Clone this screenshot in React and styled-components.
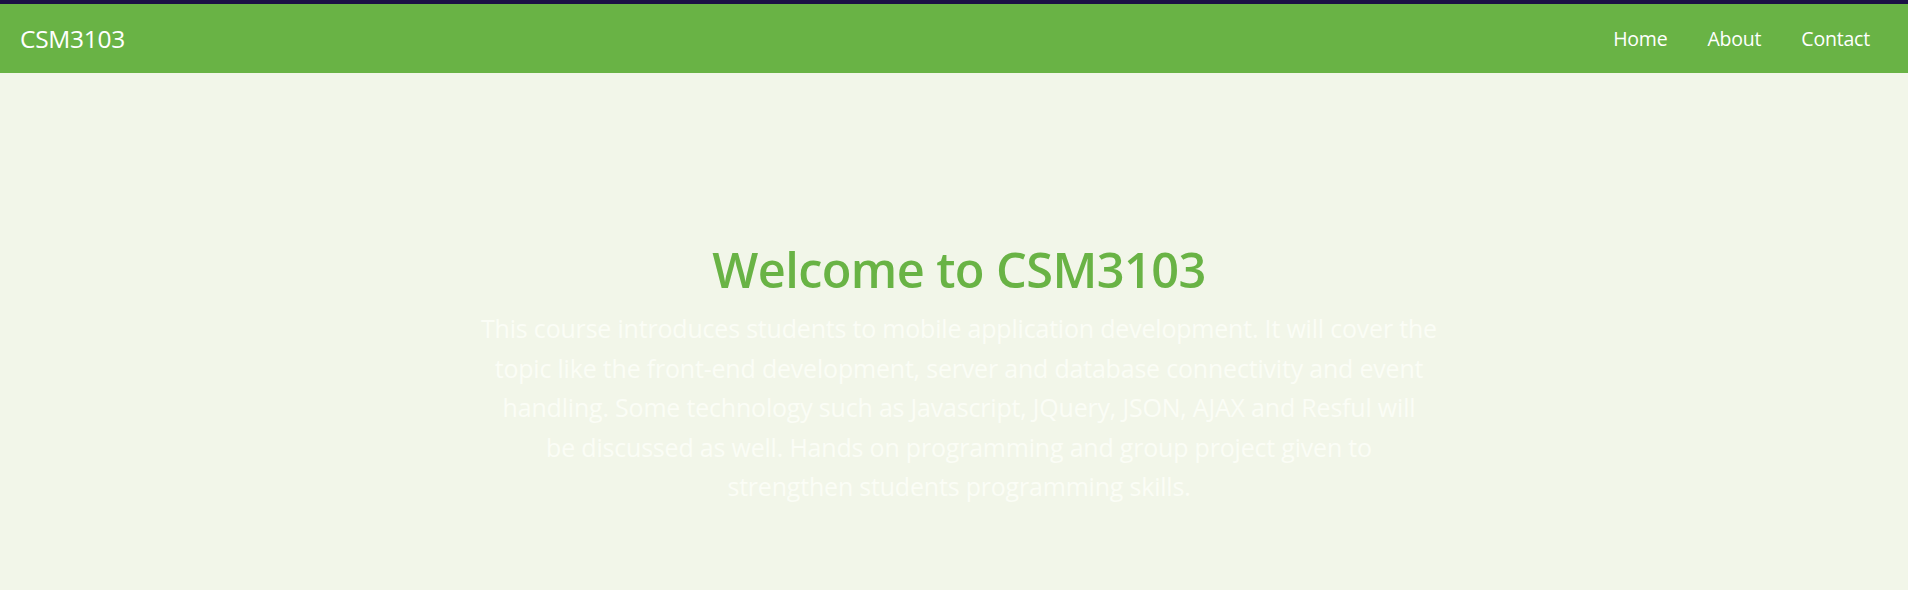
import React from 'react';
import styled, {createGlobalStyle} from 'styled-components';

const GlobalStyle = createGlobalStyle`
  * {
    box-sizing: border-box;
  }

  body {
    margin: 0;
    background: #f2f6e9;
    font-family: "Open Sans", "Noto Sans", sans-serif;
  }
`;

const TopStrip = styled.div`
  height: 4px;
  background: #1b1145;
`;

const Navbar = styled.nav`
  height: 69px;
  background: #69b345;
  display: flex;
  align-items: center;
  justify-content: space-between;
  padding: 0 18px 0 20px;
`;

const Brand = styled.a`
  color: #fff;
  font-size: 24.5px;
  text-decoration: none;
  letter-spacing: -0.3px;
`;

const NavList = styled.ul`
  display: flex;
  list-style: none;
  margin: 0;
  padding: 0;
`;

const NavLink = styled.a`
  display: block;
  padding: 0 20px;
  color: #fff;
  font-size: 19.5px;
  text-decoration: none;
  letter-spacing: -0.2px;
`;

const Hero = styled.section`
  display: flex;
  flex-direction: column;
  align-items: center;
  padding: 167px 0 0 10px;
`;

const Title = styled.h1`
  margin: 0;
  color: #69b345;
  font-size: 48.7px;
  font-weight: 600;
  line-height: 1.2;
  letter-spacing: -0.6px;
`;

const Lead = styled.p`
  margin: 11px 0 0;
  max-width: 1040px;
  text-align: center;
  color: #fbfdf6;
  font-size: 25px;
  line-height: 39.5px;
  letter-spacing: -0.2px;
`;

const links = ['Home', 'About', 'Contact'];

const leadLines = [
  'This course introduces students to mobile application development. It will cover the',
  'topic like the front-end development, server and database connectivity and event',
  'handling. Some technology such as Javascript, JQuery, JSON, AJAX and Resful will',
  'be discussed as well. Hands on programming and group project given to',
  'strengthen students programming skills.',
];

const App = () => (
  <>
    <GlobalStyle/>
    <TopStrip/>
    <Navbar>
      <Brand href="#">CSM3103</Brand>
      <NavList>
        {links.map((l) => (
          <li key={l}><NavLink href="#">{l}</NavLink></li>
        ))}
      </NavList>
    </Navbar>
    <Hero>
      <Title>Welcome to CSM3103</Title>
      <Lead>
        {leadLines.map((line, i) => (
          <React.Fragment key={i}>
            {line}
            {i < leadLines.length - 1 && <br/>}
          </React.Fragment>
        ))}
      </Lead>
    </Hero>
  </>
);

export default App;
